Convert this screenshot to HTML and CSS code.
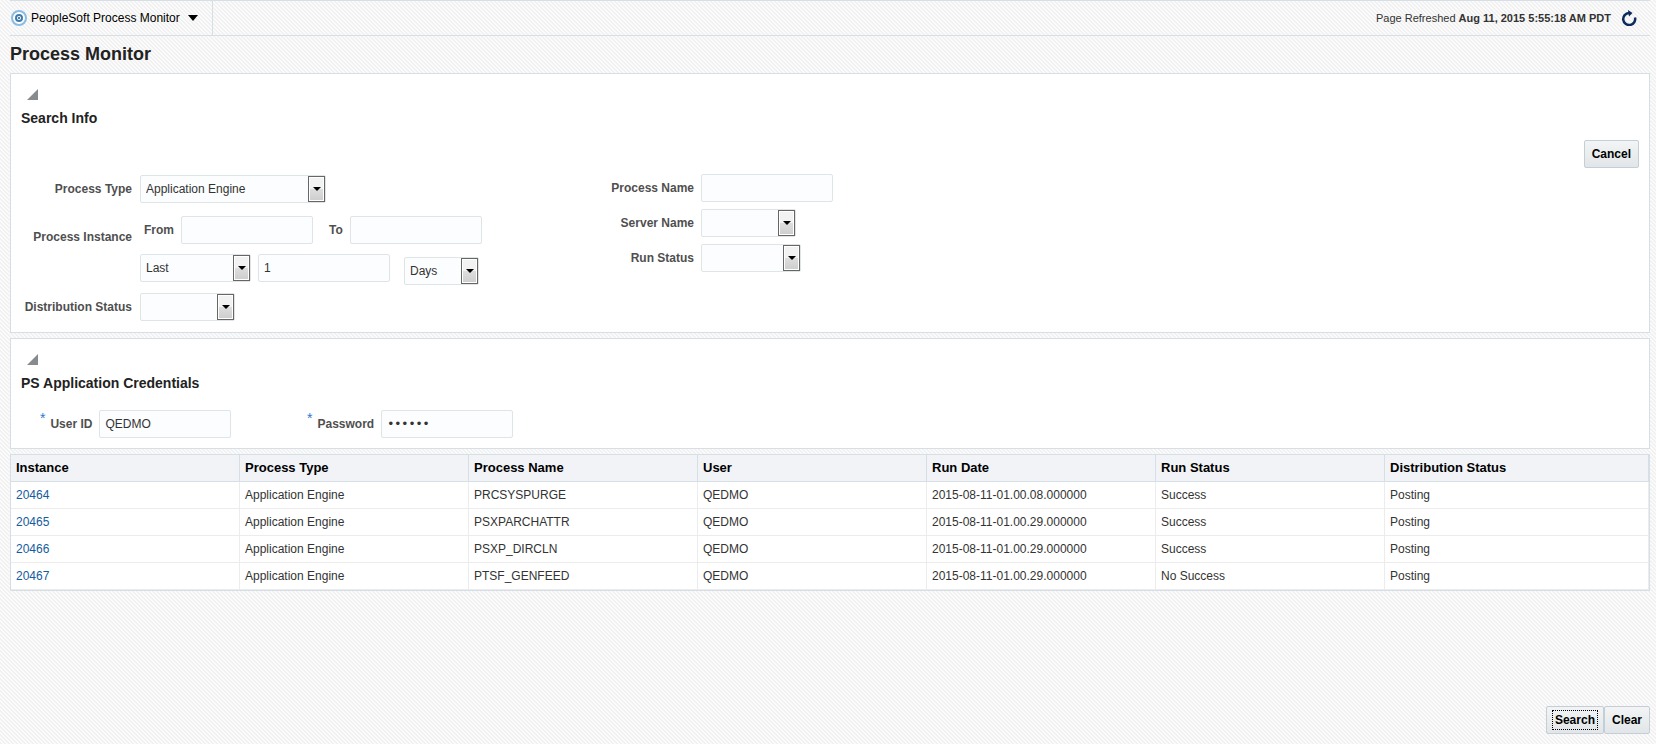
FILE: index.html
```html
<!DOCTYPE html>
<html lang="en">
<head>
<meta charset="utf-8">
<title>Process Monitor</title>
<link rel="stylesheet" href="styles.css">
</head>
<body>
<header class="topbar">
  <button type="button" class="app-menu">
    <svg class="app-icon" width="16" height="16" viewBox="0 0 16 16" aria-hidden="true">
      <circle cx="8" cy="8" r="7" fill="#fff" stroke="#86bce6" stroke-width="2"/>
      <circle cx="8" cy="8" r="3" fill="#fff" stroke="#427aa9" stroke-width="2"/>
      <circle cx="8" cy="8" r="1" fill="#155a94"/>
    </svg>
    <span>PeopleSoft Process Monitor</span>
    <svg class="menu-arrow" width="10" height="6" viewBox="0 0 10 6" aria-hidden="true"><path d="M0 0h10L5 6z" fill="#000"/></svg>
  </button>
  <div class="refresh">
    <span>Page Refreshed <strong>Aug 11, 2015 5:55:18 AM PDT</strong></span>
    <button type="button" class="refresh-button" aria-label="Refresh">
      <svg width="16" height="16" viewBox="0 0 16 16" aria-hidden="true">
        <path d="M8 3A6 6 0 1 0 14 7.500" fill="none" stroke="#0b2d5e" stroke-width="2.500"/>
        <path d="M7 0l4.500 3L8 6.500z" fill="#0b2d5e"/>
      </svg>
    </button>
  </div>
</header>

<main class="content">
  <h1 class="page-title">Process Monitor</h1>

  <section class="panel">
    <button type="button" class="toggle" aria-label="Collapse Search Info"></button>
    <h2 class="panel-title">Search Info</h2>
    <div class="panel-actions"><button type="button" class="button">Cancel</button></div>
    <form class="search-form">
      <div class="fields fields-left">
        <label class="label" for="ptype">Process Type</label>
        <span class="select type-select"><select id="ptype"><option>Application Engine</option></select></span>

        <span class="label group-label">Process Instance</span>
        <div class="instance">
          <div class="range">
            <label class="label" for="from">From</label>
            <input class="input" id="from" type="text">
            <label class="label to-label" for="to">To</label>
            <input class="input" id="to" type="text">
          </div>
          <div class="period">
            <span class="select mode-select"><select aria-label="Period"><option>Last</option></select></span>
            <input class="input" type="text" value="1" aria-label="Period length">
            <span class="select unit-select"><select aria-label="Period unit"><option>Days</option></select></span>
          </div>
        </div>

        <label class="label" for="dist">Distribution Status</label>
        <span class="select status-select"><select id="dist"><option></option></select></span>
      </div>
      <div class="fields fields-right">
        <label class="label" for="pname">Process Name</label>
        <input class="input" id="pname" type="text">
        <label class="label" for="server">Server Name</label>
        <span class="select status-select"><select id="server"><option></option></select></span>
        <label class="label" for="run">Run Status</label>
        <span class="select run-select"><select id="run"><option></option></select></span>
      </div>
    </form>
  </section>

  <section class="panel">
    <button type="button" class="toggle" aria-label="Collapse PS Application Credentials"></button>
    <h2 class="panel-title">PS Application Credentials</h2>
    <form class="credentials">
      <div class="credential">
        <span class="required">*</span>
        <label class="label" for="user">User ID</label>
        <input class="input" id="user" type="text" value="QEDMO" autocomplete="off">
      </div>
      <div class="credential">
        <span class="required">*</span>
        <label class="label" for="pass">Password</label>
        <input class="input password" id="pass" type="password" value="secret" autocomplete="off">
      </div>
    </form>
  </section>

  <table class="results">
    <colgroup><col class="col"><col class="col"><col class="col"><col class="col"><col class="col"><col class="col"><col></colgroup>
    <thead>
      <tr><th>Instance</th><th>Process Type</th><th>Process Name</th><th>User</th><th>Run Date</th><th>Run Status</th><th>Distribution Status</th></tr>
    </thead>
    <tbody>
      <tr><td><a href="#20464">20464</a></td><td>Application Engine</td><td>PRCSYSPURGE</td><td>QEDMO</td><td>2015-08-11-01.00.08.000000</td><td>Success</td><td>Posting</td></tr>
      <tr><td><a href="#20465">20465</a></td><td>Application Engine</td><td>PSXPARCHATTR</td><td>QEDMO</td><td>2015-08-11-01.00.29.000000</td><td>Success</td><td>Posting</td></tr>
      <tr><td><a href="#20466">20466</a></td><td>Application Engine</td><td>PSXP_DIRCLN</td><td>QEDMO</td><td>2015-08-11-01.00.29.000000</td><td>Success</td><td>Posting</td></tr>
      <tr><td><a href="#20467">20467</a></td><td>Application Engine</td><td>PTSF_GENFEED</td><td>QEDMO</td><td>2015-08-11-01.00.29.000000</td><td>No Success</td><td>Posting</td></tr>
    </tbody>
  </table>
</main>

<footer class="footer">
  <button type="button" class="button is-focused"><span>Search</span></button>
  <button type="button" class="button">Clear</button>
</footer>
</body>
</html>
```

FILE: styles.css
```css
*,
*::before {
  box-sizing: border-box;
}

body {
  display: flex;
  flex-direction: column;
  min-height: 100vh;
  margin: 0;
  padding: 0 6px 10px 10px;
  background: #fafafa linear-gradient(45deg, #f1f1f1 25%, #fbfbfb 25% 50%, #f1f1f1 50% 75%, #fbfbfb 75%) 0 0 / 4px 4px;
  color: #333;
  font: 12px/16px "Liberation Sans", Arial, sans-serif;
}

button,
input,
select {
  margin: 0;
  font: inherit;
}

.topbar {
  display: flex;
  justify-content: space-between;
  height: 36px;
  border: solid #d6dfe6;
  border-width: 1px 0;
}

.app-menu {
  display: flex;
  align-items: center;
  gap: 4px;
  padding: 0 14px 0 0;
  border: 0;
  border-right: 1px solid #d6dfe6;
  background: none;
  color: #000;
}

.app-icon {
  margin-left: 1px;
}

.menu-arrow {
  margin-left: 4px;
}

.refresh {
  display: flex;
  align-items: center;
  gap: 10px;
  padding-right: 13px;
  font-size: 11px;
}

.refresh-button {
  display: flex;
  padding: 0;
  border: 0;
  background: none;
}

.page-title {
  margin: 0;
  padding: 6px 0 7px;
  color: #222;
  font-size: 18px;
  line-height: 24px;
}

.panel {
  margin-bottom: 5px;
  padding: 15px 10px 10px;
  border: 1px solid #d6dfe6;
  background: #fff;
}

.toggle {
  display: block;
  width: 11px;
  height: 11px;
  margin-left: 6px;
  padding: 0;
  border: 0;
  background: #888b8d;
  clip-path: polygon(100% 0, 100% 100%, 0 100%);
}

.panel-title {
  margin: 8px 0 0;
  color: #222;
  font-size: 14px;
  line-height: 20px;
}

.panel-actions {
  display: flex;
  justify-content: flex-end;
  margin-top: 12px;
}

.button {
  height: 28px;
  padding: 0 7px;
  border: 1px solid #c4ced7;
  border-radius: 2px;
  background: linear-gradient(#f2f4f5, #e2e6e8);
  color: #000;
  font-weight: bold;
}

.search-form {
  display: flex;
  margin-top: 6px;
}

.fields {
  display: grid;
  align-items: center;
  align-content: start;
}

.fields-left {
  grid-template-columns: 111px 451px;
  gap: 8px;
  padding: 1px 0;
}

.fields-right {
  grid-template-columns: 103px auto;
  gap: 7px;
}

.label {
  color: #4f4f4f;
  font-weight: bold;
  text-align: right;
}

.group-label {
  align-self: start;
  padding-top: 18px;
}

.instance {
  padding-top: 5px;
}

.range,
.period {
  display: flex;
}

.range {
  align-items: center;
  gap: 7px;
  margin-bottom: 10px;
  padding-left: 4px;
}

.to-label {
  padding-left: 9px;
}

.period {
  gap: 7px;
  min-height: 31px;
}

.unit-select {
  align-self: flex-end;
  margin-left: 7px;
}

.input,
.select select {
  height: 28px;
  border: 1px solid #dfe4e7;
  border-radius: 2px;
  background: #fcfdfe;
  color: #333;
}

.input {
  width: 132px;
  padding: 0 5px;
}

.password {
  font-family: "DejaVu Sans", sans-serif;
}

.select {
  position: relative;
  display: flex;
}

.select select {
  width: 100%;
  padding: 0 18px 0 5px;
  appearance: none;
}

.select::before {
  content: "";
  position: absolute;
  top: 1px;
  right: 1px;
  width: 17px;
  height: 26px;
  border: 1px solid #666;
  background: linear-gradient(#f2f2f2 0 50%, #dedede 50%, #cdcdcd);
  box-shadow: inset 0 0 0 1px #fff;
  pointer-events: none;
}

.select::after {
  content: "";
  position: absolute;
  top: 12px;
  right: 5px;
  border: solid transparent;
  border-width: 4px 4px 0;
  border-top-color: #000;
  pointer-events: none;
}

.type-select {
  width: 186px;
}

.mode-select {
  width: 111px;
}

.unit-select {
  width: 75px;
}

.status-select {
  width: 95px;
}

.run-select {
  width: 100px;
}

.credentials {
  display: flex;
  padding: 17px 0 0 19px;
}

.credential {
  display: flex;
  align-items: center;
  gap: 7px;
  min-width: 267px;
}

.required {
  align-self: flex-start;
  margin-right: -2px;
  color: #2b78d4;
  font-size: 14px;
}

.results {
  width: 100%;
  table-layout: fixed;
  border: 1px solid #d6dfe6;
  border-spacing: 0;
  background: #fff;
}

.col {
  width: 229px;
}

.results th,
.results td {
  height: 27px;
  padding: 0 5px;
  border: solid #ececec;
  border-width: 0 1px 1px 0;
  text-align: left;
}

.results th {
  border-color: #d6dfe6;
  background: #f1f3f7;
  color: #000;
  font-size: 13px;
}

.results a {
  color: #145c9e;
  text-decoration: none;
}

.footer {
  display: flex;
  justify-content: flex-end;
  margin-top: auto;
}

.is-focused {
  padding: 0 5px;
}

.is-focused span {
  display: block;
  padding: 1px 2px;
  border: 1px dotted #000;
}
```
